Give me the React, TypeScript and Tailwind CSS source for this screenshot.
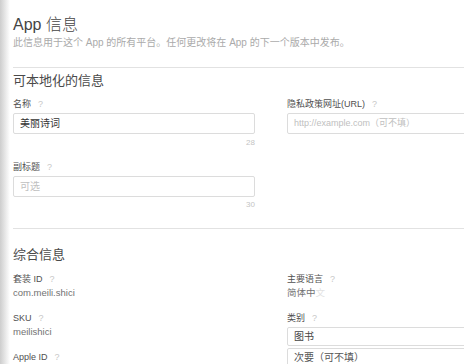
import React from 'react';

const font = "font-['Liberation_Sans','Noto_Sans_CJK_SC',sans-serif]";

function Help() {
  return <span className="ml-[7px] font-normal text-[#c8c8c8]">?</span>;
}

function Label({ children }: { children: React.ReactNode }) {
  return (
    <div className="text-[9px] leading-[12px] font-normal text-[#505050]">
      {children}
      <Help />
    </div>
  );
}

function Field({ label, value, className = '' }: { label: string; value: React.ReactNode; className?: string }) {
  return (
    <div className={className}>
      <Label>{label}</Label>
      <div className="mt-[2px] text-[9.5px] leading-[12px] text-[#727272]">{value}</div>
    </div>
  );
}

export default function App() {
  return (
    <div className={`flex h-[364px] w-[464px] overflow-hidden bg-white ${font}`}>
      {/* photo edge shading */}
      <div className="w-[10px] shrink-0 bg-gradient-to-r from-[#cdcdcd] via-[#e6e6e6] to-white" />

      <div className="flex-1 pl-[3px] pt-[15px]">
        <h1 className="text-[16px] leading-[20px] font-light text-[#444]">App 信息</h1>
        <p className="mt-[1px] text-[10px] leading-[14px] text-[#aaa]">
          此信息用于这个 App 的所有平台。任何更改将在 App 的下一个版本中发布。
        </p>

        <div className="mt-[17px] h-px bg-[#e2e2e2]" />

        <h2 className="mt-[4px] text-[13px] leading-[18px] text-[#4a4a4a]">可本地化的信息</h2>

        <div className="mt-[8px] grid grid-cols-[242px_242px] gap-x-[32px]">
          <div>
            <Label>名称</Label>
            <div className="mt-[3px] flex h-[21px] items-center rounded-[2px] border border-[#dcdcdc] pl-[6px] text-[10px] text-[#333]">
              美丽诗词
            </div>
            <div className="mt-[4px] text-right text-[8px] leading-[10px] text-[#c4c4c4]">28</div>

            <div className="mt-[13px]">
              <Label>副标题</Label>
            </div>
            <div className="mt-[3px] flex h-[21px] items-center rounded-[2px] border border-[#dcdcdc] pl-[6px] text-[10px] text-[#c0c0c0]">
              可选
            </div>
            <div className="mt-[3px] text-right text-[8px] leading-[10px] text-[#c4c4c4]">30</div>
          </div>

          <div>
            <Label>隐私政策网址(URL)</Label>
            <div className="mt-[3px] flex h-[21px] items-center rounded-[2px] border border-[#dcdcdc] pl-[6px] text-[9px] text-[#c0c0c0]">
              http://example.com（可不填）
            </div>
          </div>
        </div>

        <div className="mt-[18px] h-px bg-[#e2e2e2]" />

        <h2 className="mt-[17px] text-[13px] leading-[18px] text-[#4a4a4a]">综合信息</h2>

        <div className="mt-[9px] grid grid-cols-[242px_242px] gap-x-[32px]">
          <div>
            <Field label="套装 ID" value="com.meili.shici" />
            <Field label="SKU" value="meilishici" className="mt-[13px]" />
            <div className="mt-[13px]">
              <Label>Apple ID</Label>
            </div>
          </div>

          <div>
            <Field
              label="主要语言"
              value={
                <>
                  简体中<span className="text-[#e2e2e2]">文</span>
                </>
              }
            />
            <div className="mt-[13px]">
              <Label>类别</Label>
            </div>
            <div className="mt-[3px] flex h-[19px] items-center rounded-[2px] border border-[#dcdcdc] pl-[6px] text-[10px] text-[#444]">
              图书
            </div>
            <div className="mt-[2px] flex h-[19px] items-center rounded-[2px] border border-[#dcdcdc] pl-[6px] text-[10px] text-[#555]">
              次要（可不填）
            </div>
          </div>
        </div>
      </div>
    </div>
  );
}
